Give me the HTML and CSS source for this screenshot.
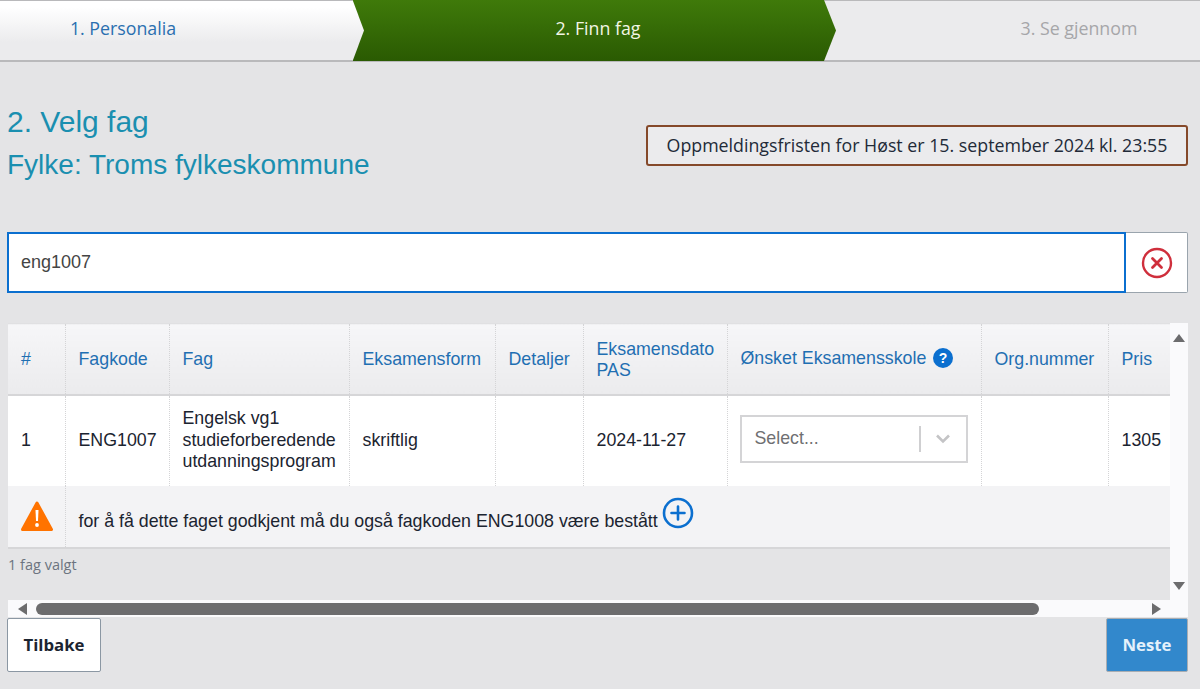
FILE: index.html
```html
<!DOCTYPE html>
<html lang="no">
<head>
<meta charset="utf-8">
<title>Velg fag</title>
<link rel="stylesheet" href="styles.css">
</head>
<body>
<nav class="steps">
  <div class="step step-done"><span>1. Personalia</span></div>
  <div class="step step-active"><span>2. Finn fag</span></div>
  <div class="step step-next"><span>3. Se gjennom</span></div>
</nav>
<main class="page">
  <header class="head">
    <div class="titles">
      <h1>2. Velg fag</h1>
      <h2>Fylke: Troms fylkeskommune</h2>
    </div>
    <div class="notice">Oppmeldingsfristen for Høst er 15. september 2024 kl. 23:55</div>
  </header>
  <div class="search">
    <div class="search-input">eng1007</div>
    <div class="search-clear">
      <svg width="32" height="32" viewBox="0 0 32 32" fill="none" stroke="#cf2f3c"><circle cx="16" cy="16" r="14" stroke-width="2.4"/><path d="M11.5 11.5l9 9M20.5 11.5l-9 9" stroke-width="2.8" stroke-linecap="round"/></svg>
    </div>
  </div>
  <section class="scroller">
    <div class="viewport">
      <table class="grid">
        <colgroup>
          <col class="c1"><col class="c2"><col class="c3"><col class="c4"><col class="c5"><col class="c6"><col class="c7"><col class="c8"><col class="c9">
        </colgroup>
        <thead>
          <tr>
            <th>#</th><th>Fagkode</th><th>Fag</th><th>Eksamensform</th><th>Detaljer</th><th>Eksamensdato<br>PAS</th>
            <th><span class="school">Ønsket Eksamensskole<svg class="help" width="20" height="20" viewBox="0 0 20 20"><circle cx="10" cy="10" r="10" fill="#0b6fcf"/><text x="10" y="14.5" text-anchor="middle" class="help-q">?</text></svg></span></th>
            <th>Org.nummer</th><th>Pris</th>
          </tr>
        </thead>
        <tbody>
          <tr class="row">
            <td>1</td><td>ENG1007</td><td>Engelsk vg1 studieforberedende utdanningsprogram</td><td>skriftlig</td><td></td><td>2024-11-27</td>
            <td>
              <div class="select">
                <span class="select-text">Select...</span>
                <span class="select-sep"></span>
                <svg width="16" height="10" viewBox="0 0 16 10" fill="none" stroke="#c4c4c6" stroke-width="2.6"><path d="M2 1.5l6 6 6-6"/></svg>
              </div>
            </td>
            <td></td><td>1305</td>
          </tr>
          <tr class="warn">
            <td class="warn-icon">
              <svg width="32" height="30" viewBox="0 0 32 30"><path d="M16 2L30.5 28.5H1.500z" fill="#ff7300" stroke="#ff7300" stroke-width="3" stroke-linejoin="round"/><path d="M14.500 9h3l-.5 11h-2z" fill="#fff"/><circle cx="16" cy="24" r="1.900" fill="#fff"/></svg>
            </td>
            <td colspan="8" class="warn-text">for å få dette faget godkjent må du også fagkoden ENG1008 være bestått<svg class="plus" width="32" height="32" viewBox="0 0 32 32" fill="none" stroke="#0b6fcf"><circle cx="16" cy="16" r="14" stroke-width="2.600"/><path d="M9.500 16h13M16 9.500v13" stroke-width="2.600" stroke-linecap="round"/></svg></td>
          </tr>
        </tbody>
      </table>
      <p class="count">1 fag valgt</p>
    </div>
    <div class="vbar">
      <span class="arrow arrow-up"></span>
      <span class="arrow arrow-down"></span>
    </div>
    <div class="hbar">
      <span class="arrow arrow-left"></span>
      <span class="track"><span class="thumb"></span></span>
      <span class="arrow arrow-right"></span>
    </div>
  </section>
  <footer class="actions">
    <button class="btn btn-back">Tilbake</button>
    <button class="btn btn-next">Neste</button>
  </footer>
</main>
</body>
</html>
```
FILE: styles.css
```css
* { box-sizing: border-box; }
html, body { margin: 0; height: 100%; }
body { background: #e4e4e6; font-family: "Liberation Sans", Arial, sans-serif; color: #1b2430; overflow: hidden; }

.steps { display: flex; height: 62px; background: #b9b9bb; padding: 1px 0 2px; font-family: "Open Sans", sans-serif; font-size: 17.8px; }
.step { display: flex; align-items: center; justify-content: center; height: 59px; padding-bottom: 5px; }
.step-done { width: 364px; padding-right: 118px; color: #2a6fb0; background: linear-gradient(#ffffff 10%, #ebebed 70%); clip-path: polygon(0 0, 353px 0, 100% 50%, 353px 100%, 0 100%); position: relative; z-index: 2; }
.step-active { width: 483px; margin-left: -11px; padding-left: 8px; padding-right: 1px; color: #f2f6e4; background: linear-gradient(#3f7a0a, #2a5a02); clip-path: polygon(0 0, 471px 0, 100% 50%, 471px 100%, 0 100%); position: relative; z-index: 1; height: 61px; margin-top: -1px; margin-bottom: -1px; }
.step-next { flex: 1; margin-left: -12px; padding-left: 134px; color: #a6a6a9; background: #ebebed; }

.page { padding: 0 12px 0 7px; }
.head { display: flex; justify-content: space-between; height: 170px; }
.titles { padding-top: 43px; }
h1 { margin: 0; font-weight: 400; font-size: 30px; line-height: 34px; color: #1a8fb0; }
h2 { margin: 9px 0 0; font-weight: 400; font-size: 28px; line-height: 34px; color: #1a8fb0; }
.notice { margin-top: 63px; width: 542px; height: 41px; padding-bottom: 2px; border: 2px solid #85492a; border-radius: 3px; background: #ebebed; font-family: "Open Sans", sans-serif; font-size: 17.8px; display: flex; align-items: center; justify-content: center; color: #222a38; }

.search { display: flex; height: 61px; }
.search-input { flex: 1; border: 2px solid #0b6fcf; background: #fff; padding: 0 12px; display: flex; align-items: center; font-size: 18px; color: #444; }
.search-clear { width: 62px; background: #fff; border: 1px solid #9aa4ad; border-left: 0; border-radius: 0 2px 2px 0; display: flex; align-items: center; justify-content: center; }

.scroller { margin: 30px 0 0 1px; width: 1180px; height: 294px; position: relative; display: grid; grid-template-columns: 1162px 18px; grid-template-rows: 277px 17px; background: #fafafc; }
.viewport { overflow: hidden; background: #e4e4e6; }
.grid { border-collapse: collapse; table-layout: fixed; width: 1162px; font-size: 17.8px; }
.c1 { width: 57px; } .c2 { width: 104px; } .c3 { width: 180px; } .c4 { width: 146px; } .c5 { width: 88px; } .c6 { width: 144px; } .c7 { width: 254px; } .c8 { width: 127px; } .c9 { width: 62px; }
.grid th { height: 71px; padding: 2px 0 0 13px; text-align: left; font-weight: 400; color: #1f6fb2; line-height: 21px; background: linear-gradient(#f6f6f8, #ebebed); border-bottom: 2px solid #d6d6d8; border-right: 1px dotted #d4d4d6; border-top: 1px solid #e0e0e2; }
.grid th:last-child, .grid td:last-child { border-right: 0; }
.school { display: flex; align-items: center; gap: 7px; white-space: nowrap; margin-top: -3px; }
.help { display: block; }
.help-q { fill: #fff; font: 700 14px "Liberation Sans", sans-serif; }
.row td { height: 91px; padding: 0 0 0 13px; background: #fff; border-right: 1px dotted #d4d4d6; line-height: 21.5px; color: #1b2430; }
.select { width: 228px; height: 48px; margin: 0 0 4px -1px; border: 2px solid #d4d4d6; display: flex; align-items: center; padding: 0 15px 0 13px; }
.select-text { flex: 1; color: #6f6f72; }
.select-sep { width: 2px; height: 26px; background: #cfcfd1; margin-right: 14px; }
.warn td { height: 62px; background: #f3f3f5; border-bottom: 2px solid #d6d6d8; }
.warn-icon { border-right: 1px dotted #d4d4d6; padding: 0 0 0 13px; }
.warn-icon svg { display: block; }
.warn-text { padding: 0 0 4px 13px; white-space: nowrap; }
.plus { vertical-align: -2px; margin-left: 4px; }
.count { margin: 6px 0 0; font: 14.5px "Open Sans", sans-serif; color: #6c7480; }

.vbar { display: flex; flex-direction: column; justify-content: space-between; align-items: center; padding: 11px 0 10px; background: #fafafc; }
.hbar { grid-column: 1 / 3; display: flex; align-items: center; padding: 0 27px 0 10px; background: #fafafc; }
.track { flex: 1; padding: 0 113px 0 9px; }
.thumb { display: block; height: 12px; border-radius: 6px; background: #6c6c6e; }
.arrow { display: block; width: 0; height: 0; border-style: solid; border-color: transparent; }
.arrow-up { border-width: 0 6px 8px; border-bottom-color: #6c6c6e; }
.arrow-down { border-width: 8px 6px 0; border-top-color: #6c6c6e; }
.arrow-left { border-width: 6px 9px 6px 0; border-right-color: #6c6c6e; }
.arrow-right { border-width: 6px 0 6px 9px; border-left-color: #6c6c6e; }

.actions { display: flex; justify-content: space-between; align-items: flex-start; margin-top: 1px; }
.btn { height: 54px; padding: 0 0 2px; font: 700 16.8px "Open Sans", sans-serif; border-radius: 2px; cursor: pointer; }
.btn-back { width: 94px; background: #fff; border: 1px solid #8b97a3; color: #1b2430; }
.btn-next { width: 82px; background: #3288cc; border: 1px solid #a9adb2; color: #e4f1fb; }
```
